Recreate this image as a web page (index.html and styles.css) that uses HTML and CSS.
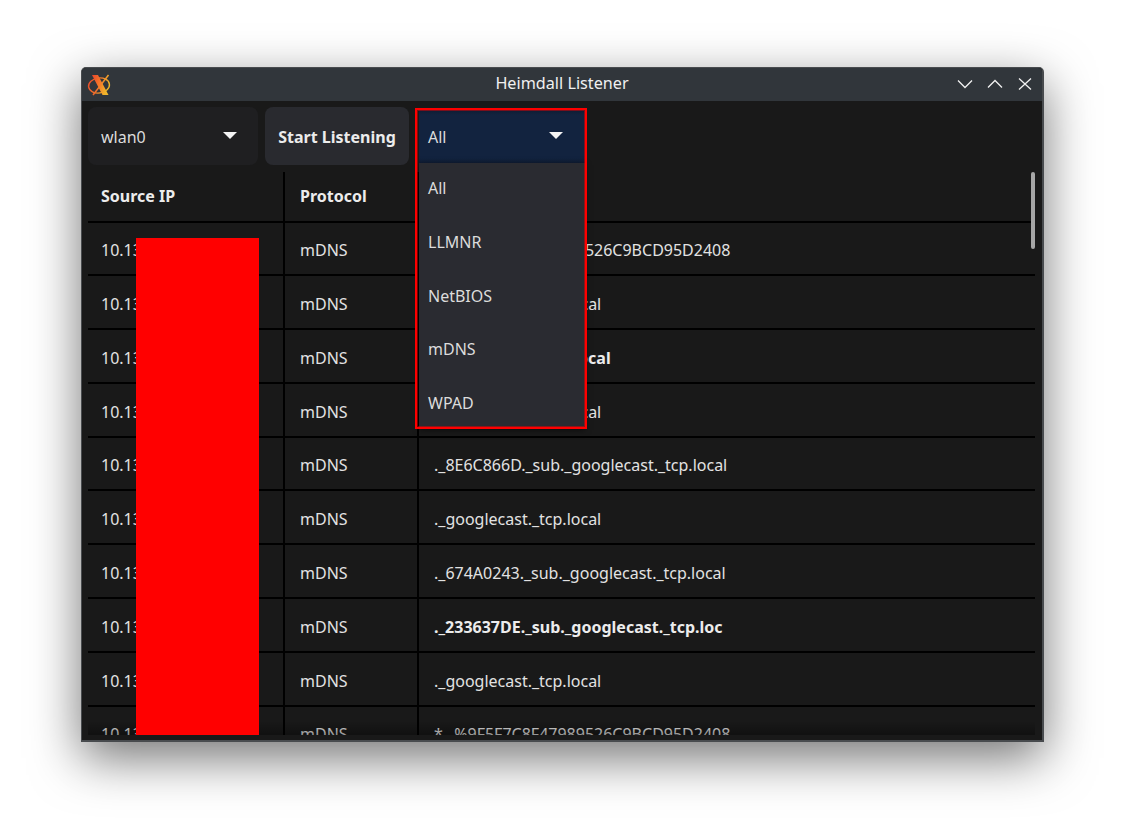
FILE: index.html
```html
<!DOCTYPE html>
<html lang="en">
<head>
  <meta charset="UTF-8">
  <title>Heimdall Listener</title>
  <link rel="stylesheet" href="styles.css">
</head>
<body>
  <div class="window">
    <div class="titlebar">
      <svg class="logo" width="26" height="24" viewBox="0 0 26 24">
        <defs>
          <linearGradient id="logo-grad" x1="0" y1="0" x2="1" y2="0.4">
            <stop offset="0" stop-color="#e8452c"/>
            <stop offset="0.5" stop-color="#f5752a"/>
            <stop offset="1" stop-color="#f0b52a"/>
          </linearGradient>
        </defs>
        <ellipse cx="13" cy="12.5" rx="10.500" ry="7.500" fill="none" stroke="url(#logo-grad)" stroke-width="1.4" transform="rotate(-8 13 12.5)"/>
        <path d="M6 2h6l10.500 20h-6z" fill="url(#logo-grad)"/>
        <path d="M22.500 2L7 22" fill="none" stroke="url(#logo-grad)" stroke-width="1.500"/>
      </svg>
      <span class="title">Heimdall Listener</span>
      <div class="window-buttons">
        <svg width="16" height="16" viewBox="0 0 16 16"><path d="M1 3.500l7 7 7-7" fill="none" stroke="#f2f2f2" stroke-width="1.300"/></svg>
        <svg width="16" height="16" viewBox="0 0 16 16"><path d="M1 10.500l7-7 7 7" fill="none" stroke="#f2f2f2" stroke-width="1.300"/></svg>
        <svg width="16" height="16" viewBox="0 0 16 16"><path d="M2 1.500l12 11M14 1.500l-12 11" fill="none" stroke="#f2f2f2" stroke-width="1.300"/></svg>
      </div>
    </div>

    <div class="content">
      <div class="toolbar">
        <div class="select iface-select">
          <span class="select-label">wlan0</span>
          <span class="arrow"></span>
        </div>
        <button class="start-button">Start Listening</button>
        <div class="filter">
          <div class="select filter-select">
            <span>All</span>
            <span class="arrow"></span>
          </div>
          <div class="filter-menu">
            <div class="filter-item">All</div>
            <div class="filter-item">LLMNR</div>
            <div class="filter-item">NetBIOS</div>
            <div class="filter-item">mDNS</div>
            <div class="filter-item">WPAD</div>
          </div>
          <div class="highlight"></div>
        </div>
      </div>

      <div class="table-area">
        <div class="row header">
          <div class="cell ip">Source IP</div>
          <div class="cell proto">Protocol</div>
          <div class="cell name">Name</div>
        </div>
        <div class="row">
          <div class="cell ip">10.13</div>
          <div class="cell proto">mDNS</div>
          <div class="cell name">*._%9F5F7C8F47989526C9BCD95D2408</div>
        </div>
        <div class="row">
          <div class="cell ip">10.13</div>
          <div class="cell proto">mDNS</div>
          <div class="cell name">._googlecast._tcp.local</div>
        </div>
        <div class="row">
          <div class="cell ip">10.13</div>
          <div class="cell proto">mDNS</div>
          <div class="cell name bold">._googlecast._tcp.local</div>
        </div>
        <div class="row">
          <div class="cell ip">10.13</div>
          <div class="cell proto">mDNS</div>
          <div class="cell name">._googlecast._tcp.local</div>
        </div>
        <div class="row">
          <div class="cell ip">10.13</div>
          <div class="cell proto">mDNS</div>
          <div class="cell name">._8E6C866D._sub._googlecast._tcp.local</div>
        </div>
        <div class="row">
          <div class="cell ip">10.13</div>
          <div class="cell proto">mDNS</div>
          <div class="cell name">._googlecast._tcp.local</div>
        </div>
        <div class="row">
          <div class="cell ip">10.13</div>
          <div class="cell proto">mDNS</div>
          <div class="cell name">._674A0243._sub._googlecast._tcp.local</div>
        </div>
        <div class="row">
          <div class="cell ip">10.13</div>
          <div class="cell proto">mDNS</div>
          <div class="cell name bold">._233637DE._sub._googlecast._tcp.loc</div>
        </div>
        <div class="row">
          <div class="cell ip">10.13</div>
          <div class="cell proto">mDNS</div>
          <div class="cell name">._googlecast._tcp.local</div>
        </div>
        <div class="row">
          <div class="cell ip">10.13</div>
          <div class="cell proto">mDNS</div>
          <div class="cell name">*._%9F5F7C8F47989526C9BCD95D2408</div>
        </div>
        <div class="bottom-fade"></div>
        <div class="scrollbar"></div>
        <div class="redaction"></div>
      </div>
    </div>
  </div>
</body>
</html>
```

FILE: styles.css
```css
html, body {
  margin: 0;
  height: 100%;
  background: #fff;
  overflow: hidden;
}
body {
  padding: 67px 0 0 81px;
  box-sizing: border-box;
  font-family: "Noto Sans", sans-serif;
  font-size: 16px;
  color: #e4e4e4;
}
.window {
  width: 963px;
  height: 675px;
  box-sizing: border-box;
  display: flex;
  flex-direction: column;
  background: #191919;
  border: 1px solid #484b4e;
  border-right-width: 2px;
  border-bottom-width: 2px;
  border-radius: 5px 5px 0 0;
  box-shadow: 0 16px 50px rgba(0, 0, 0, 0.55);
}
.titlebar {
  flex: none;
  height: 33px;
  box-sizing: border-box;
  padding-bottom: 4px;
  display: flex;
  align-items: center;
  justify-content: center;
  position: relative;
  background: #31363b;
  border-radius: 4px 4px 0 0;
  color: #f0f0f0;
}
.title {
  font-size: 16.2px;
}
.logo {
  position: absolute;
  left: 4px;
  top: 5px;
}
.window-buttons {
  position: absolute;
  right: 9px;
  top: 9px;
  display: flex;
  gap: 14px;
}
.content {
  flex: 1;
  min-height: 0;
  display: flex;
  flex-direction: column;
  padding: 6px 7px 5px 6px;
}
.toolbar {
  flex: none;
  display: flex;
  height: 58px;
}
.select {
  display: flex;
  align-items: center;
  justify-content: space-between;
  box-sizing: border-box;
  color: #dcdcdc;
}
.select-label {
  padding-top: 2px;
}
.iface-select {
  width: 170px;
  height: 58px;
  padding: 0 21px 0 13px;
  background: #1f1f21;
  border-radius: 8px;
}
.arrow {
  width: 0;
  height: 0;
  margin-top: -2px;
  border-left: 7px solid transparent;
  border-right: 7px solid transparent;
  border-top: 7px solid #f4f4f4;
}
.start-button {
  width: 144px;
  height: 58px;
  margin-left: 7px;
  padding: 2px 0 0;
  background: #292a2f;
  border: none;
  border-radius: 8px;
  color: #ececec;
  font-family: inherit;
  font-size: 16px;
  font-weight: 700;
}
.filter {
  position: relative;
  margin-left: 10px;
  width: 166px;
}
.filter-select {
  height: 53px;
  margin-top: 3px;
  padding: 0 22px 0 9px;
  background: linear-gradient(#0f1c33, #12233f 5px, #12233f 48px, #0f1c33);
}
.filter-menu {
  position: absolute;
  z-index: 2;
  left: 0;
  top: 56px;
  width: 166px;
  height: 265px;
  background: #2a2b31;
  box-shadow: 0 2px 6px rgba(0, 0, 0, 0.5);
}
.filter-item {
  height: 53.700px;
  display: flex;
  align-items: center;
  padding: 0 9px 3px;
  box-sizing: border-box;
  color: #dcdcdc;
}
.highlight {
  position: absolute;
  z-index: 3;
  left: -4px;
  top: 1px;
  width: 172px;
  height: 321px;
  box-sizing: border-box;
  border: 2px solid #f00;
  box-shadow: inset 0 0 0 1px rgba(255, 0, 0, 0.45);
}
.table-area {
  position: relative;
  flex: 1;
  min-height: 0;
  margin-top: 7px;
  overflow: hidden;
}
.row {
  display: flex;
  height: 53.800px;
  box-sizing: border-box;
  border-bottom: 2px solid #000;
}
.header {
  height: 50.500px;
  font-weight: 700;
  color: #ececec;
}
.cell {
  box-sizing: border-box;
  display: flex;
  align-items: center;
  padding-top: 3.500px;
  padding-left: 13px;
  white-space: nowrap;
  color: #e2e2e2;
}
.header .cell {
  padding-top: 0;
  color: #ececec;
}
.ip {
  width: 197px;
  border-right: 2px solid #000;
}
.proto {
  width: 134px;
  padding-left: 15px;
  border-right: 2px solid #000;
}
.name {
  padding-left: 15px;
}
.bold {
  font-weight: 700;
  color: #ececec;
}
.bottom-fade {
  position: absolute;
  left: 0;
  right: 0;
  bottom: 0;
  height: 14px;
  background: linear-gradient(rgba(0, 0, 0, 0), rgba(0, 0, 0, 0.35));
}
.scrollbar {
  position: absolute;
  top: 0;
  right: 0;
  width: 4px;
  height: 77px;
  background: #a6a6a6;
  border-radius: 2px;
}
.redaction {
  position: absolute;
  left: 48px;
  top: 66px;
  bottom: 0;
  width: 123px;
  background: #f00;
}
```
